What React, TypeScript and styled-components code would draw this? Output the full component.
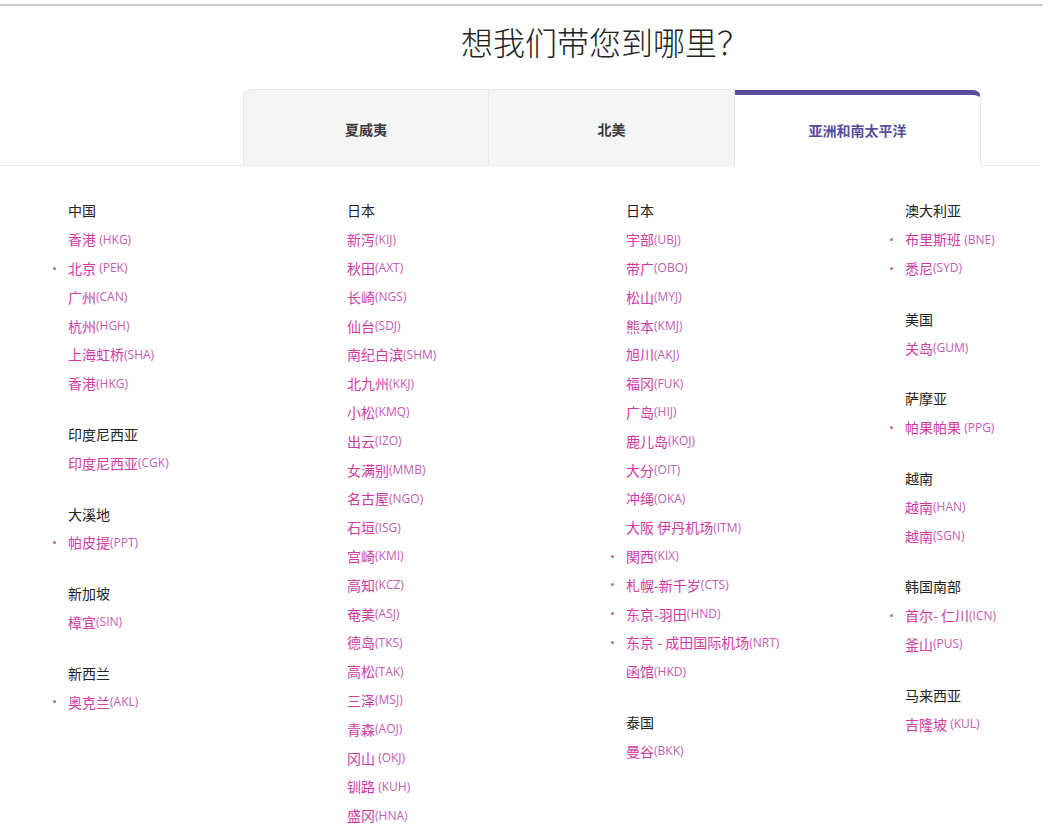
import React from 'react';
import styled, { createGlobalStyle } from 'styled-components';

const GlobalStyle = createGlobalStyle`
  html, body {
    margin: 0;
    padding: 0;
    background: #ffffff;
  }
  body {
    font-family: "Noto Sans CJK SC", "Noto Sans", sans-serif;
    color: #222;
  }
`;

const Page = styled.div`
  width: 1043px;
  padding-top: 4px;
`;

const TopRule = styled.div`
  height: 2px;
  background: #c9c9c9;
`;

const Title = styled.h1`
  margin: 0;
  padding: 14px 0 0 243px;
  width: 724px;
  text-align: center;
  font-size: 32px;
  line-height: 42px;
  font-weight: 300;
  color: #222;
`;

const TabBar = styled.div`
  display: flex;
  width: 1040px;
  margin-top: 27px;
  padding-left: 243px;
  box-sizing: border-box;
  border-bottom: 1px solid #ececec;
`;

const Tab = styled.div<{ $active?: boolean; $first?: boolean }>`
  width: 246px;
  height: ${({ $active }) => ($active ? '76px' : '77px')};
  display: flex;
  align-items: center;
  justify-content: center;
  box-sizing: border-box;
  margin-bottom: -1px;
  font-size: 14px;
  font-weight: 600;
  color: ${({ $active }) => ($active ? '#5a4b9b' : '#3a3a3a')};
  background: ${({ $active }) => ($active ? '#fff' : '#f5f5f7')};
  border: 1px solid #e6e6ea;
  border-top: ${({ $active }) =>
    $active ? '5px solid #5c4c9d' : '1px solid #e6e6ea'};
  border-bottom: ${({ $active }) =>
    $active ? '1px solid #fff' : '1px solid #ececec'};
  border-left: ${({ $first }) => ($first ? '1px solid #e6e6ea' : 'none')};
  border-radius: ${({ $active, $first }) =>
    $active ? '0 8px 0 0' : $first ? '8px 0 0 0' : '0'};
  align-self: flex-end;
  padding-top: ${({ $active }) => ($active ? '0' : '3px')};
`;

const Columns = styled.div`
  display: grid;
  grid-template-columns: repeat(3, 279px) 1fr;
  padding: 30px 0 0 68px;
`;

const Column = styled.div`
  display: flex;
  flex-direction: column;
  gap: 22px;
`;

const Group = styled.ul`
  list-style: none;
  margin: 0;
  padding: 0;
`;

const GroupTitle = styled.li`
  height: 28.8px;
  display: flex;
  align-items: center;
  font-size: 14px;
  color: #222;
`;

const Airport = styled.li<{ $dot?: boolean }>`
  position: relative;
  height: 28.8px;
  display: flex;
  align-items: center;
  white-space: pre;
  font-size: 14px;
  color: #d03aa4;

  &::before {
    content: '';
    display: ${({ $dot }) => ($dot ? 'block' : 'none')};
    position: absolute;
    left: -15px;
    top: 13px;
    width: 3px;
    height: 3px;
    border-radius: 50%;
    background: #b46aa8;
  }
`;

const Code = styled.span`
  font-family: "Open Sans", "Noto Sans", sans-serif;
  font-size: 12px;
  color: #c55bb2;
`;

type Port = { name: string; code: string; dot?: boolean; gap?: boolean };
type Region = { title: string; ports: Port[] };

const p = (name: string, code: string, dot = false, gap = false): Port => ({
  name,
  code,
  dot,
  gap,
});

const columns: Region[][] = [
  [
    {
      title: '中国',
      ports: [
        p('香港', 'HKG', false, true),
        p('北京', 'PEK', true, true),
        p('广州', 'CAN'),
        p('杭州', 'HGH'),
        p('上海虹桥', 'SHA'),
        p('香港', 'HKG'),
      ],
    },
    { title: '印度尼西亚', ports: [p('印度尼西亚', 'CGK')] },
    { title: '大溪地', ports: [p('帕皮提', 'PPT', true)] },
    { title: '新加坡', ports: [p('樟宜', 'SIN')] },
    { title: '新西兰', ports: [p('奥克兰', 'AKL', true)] },
  ],
  [
    {
      title: '日本',
      ports: [
        p('新泻', 'KIJ'),
        p('秋田', 'AXT'),
        p('长崎', 'NGS'),
        p('仙台', 'SDJ'),
        p('南纪白滨', 'SHM'),
        p('北九州', 'KKJ'),
        p('小松', 'KMQ'),
        p('出云', 'IZO'),
        p('女满别', 'MMB'),
        p('名古屋', 'NGO'),
        p('石垣', 'ISG'),
        p('宫崎', 'KMI'),
        p('高知', 'KCZ'),
        p('奄美', 'ASJ'),
        p('德岛', 'TKS'),
        p('高松', 'TAK'),
        p('三泽', 'MSJ'),
        p('青森', 'AOJ'),
        p('冈山', 'OKJ', false, true),
        p('钏路', 'KUH', false, true),
        p('盛冈', 'HNA'),
      ],
    },
  ],
  [
    {
      title: '日本',
      ports: [
        p('宇部', 'UBJ'),
        p('带广', 'OBO'),
        p('松山', 'MYJ'),
        p('熊本', 'KMJ'),
        p('旭川', 'AKJ'),
        p('福冈', 'FUK'),
        p('广岛', 'HIJ'),
        p('鹿儿岛', 'KOJ'),
        p('大分', 'OIT'),
        p('冲绳', 'OKA'),
        p('大阪 伊丹机场', 'ITM'),
        p('関西', 'KIX', true),
        p('札幌-新千岁', 'CTS', true),
        p('东京-羽田', 'HND', true),
        p('东京 - 成田国际机场', 'NRT', true),
        p('函馆', 'HKD'),
      ],
    },
    { title: '泰国', ports: [p('曼谷', 'BKK')] },
  ],
  [
    {
      title: '澳大利亚',
      ports: [p('布里斯班', 'BNE', true, true), p('悉尼', 'SYD', true)],
    },
    { title: '美国', ports: [p('关岛', 'GUM')] },
    { title: '萨摩亚', ports: [p('帕果帕果', 'PPG', true, true)] },
    { title: '越南', ports: [p('越南', 'HAN'), p('越南', 'SGN')] },
    {
      title: '韩国南部',
      ports: [p('首尔- 仁川', 'ICN', true), p('釜山', 'PUS')],
    },
    { title: '马来西亚', ports: [p('吉隆坡', 'KUL', false, true)] },
  ],
];

const tabs = ['夏威夷', '北美', '亚洲和南太平洋'];

const App: React.FC = () => (
  <>
    <GlobalStyle />
    <Page>
      <TopRule />
      <Title>想我们带您到哪里？</Title>
      <TabBar>
        {tabs.map((tab, i) => (
          <Tab key={tab} $first={i === 0} $active={i === tabs.length - 1}>
            {tab}
          </Tab>
        ))}
      </TabBar>
      <Columns>
        {columns.map((regions, ci) => (
          <Column key={ci}>
            {regions.map((region) => (
              <Group key={region.title}>
                <GroupTitle>{region.title}</GroupTitle>
                {region.ports.map((port, pi) => (
                  <Airport key={pi} $dot={port.dot}>
                    {port.name}
                    {port.gap ? ' ' : ''}
                    <Code>({port.code})</Code>
                  </Airport>
                ))}
              </Group>
            ))}
          </Column>
        ))}
      </Columns>
    </Page>
  </>
);

export default App;
